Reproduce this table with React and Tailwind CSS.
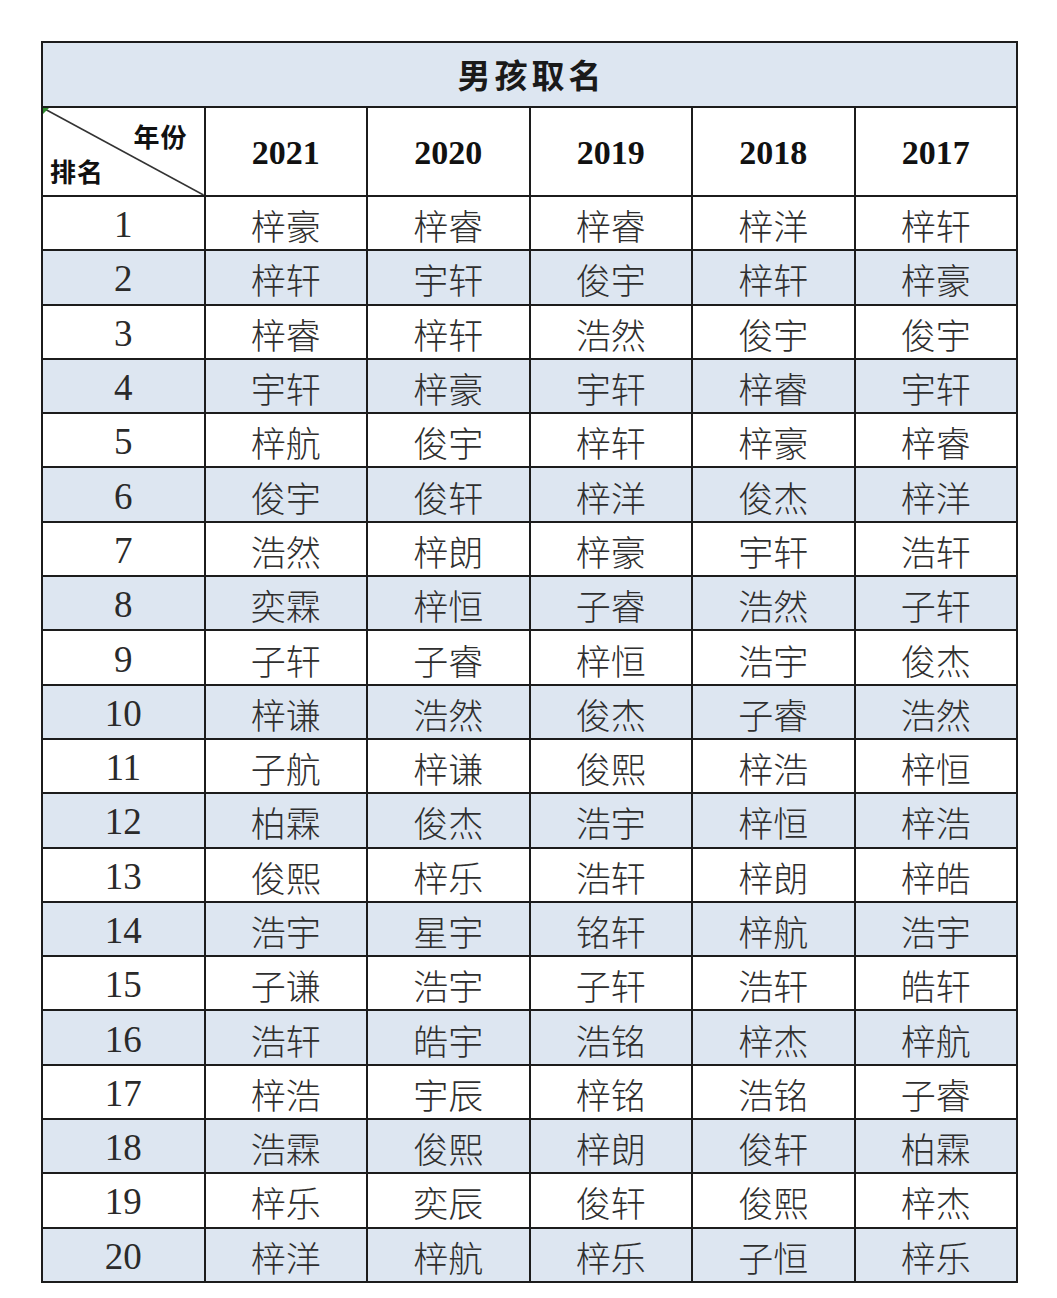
const years = ['2021', '2020', '2019', '2018', '2017']

const rows = [
  ['梓豪', '梓睿', '梓睿', '梓洋', '梓轩'],
  ['梓轩', '宇轩', '俊宇', '梓轩', '梓豪'],
  ['梓睿', '梓轩', '浩然', '俊宇', '俊宇'],
  ['宇轩', '梓豪', '宇轩', '梓睿', '宇轩'],
  ['梓航', '俊宇', '梓轩', '梓豪', '梓睿'],
  ['俊宇', '俊轩', '梓洋', '俊杰', '梓洋'],
  ['浩然', '梓朗', '梓豪', '宇轩', '浩轩'],
  ['奕霖', '梓恒', '子睿', '浩然', '子轩'],
  ['子轩', '子睿', '梓恒', '浩宇', '俊杰'],
  ['梓谦', '浩然', '俊杰', '子睿', '浩然'],
  ['子航', '梓谦', '俊熙', '梓浩', '梓恒'],
  ['柏霖', '俊杰', '浩宇', '梓恒', '梓浩'],
  ['俊熙', '梓乐', '浩轩', '梓朗', '梓皓'],
  ['浩宇', '星宇', '铭轩', '梓航', '浩宇'],
  ['子谦', '浩宇', '子轩', '浩轩', '皓轩'],
  ['浩轩', '皓宇', '浩铭', '梓杰', '梓航'],
  ['梓浩', '宇辰', '梓铭', '浩铭', '子睿'],
  ['浩霖', '俊熙', '梓朗', '俊轩', '柏霖'],
  ['梓乐', '奕辰', '俊轩', '俊熙', '梓杰'],
  ['梓洋', '梓航', '梓乐', '子恒', '梓乐'],
]

const cjk = "font-['Noto_Sans_CJK_SC',sans-serif]"
const serif = "font-['Liberation_Serif','Noto_Sans_CJK_SC',serif]"

export default function App() {
  return (
    <div className="min-h-[1298px] bg-white pl-[41px] pt-[41px]">
      <table className="w-[977px] table-fixed border-collapse border-2 border-[#1c1c1c] text-center">
        <tbody>
          <tr className="h-[65px] bg-[#dde6f1]">
            <td colSpan={6} className="border-2 border-[#1c1c1c] p-0">
              <span className={`${cjk} pl-[4px] text-[33px] font-bold tracking-[4px] text-[#1a1a1a]`}>男孩取名</span>
            </td>
          </tr>
          <tr className="h-[89px] bg-white">
            <td className="relative border-2 border-[#1c1c1c] p-0">
              <svg className="absolute inset-0 h-full w-full" preserveAspectRatio="none" viewBox="0 0 100 100">
                <line x1="0" y1="0" x2="100" y2="100" stroke="#333" strokeWidth="1.6" vectorEffect="non-scaling-stroke" />
              </svg>
              <div className="absolute left-0 top-0 h-0 w-0 border-r-[6px] border-t-[6px] border-r-transparent border-t-[#2f8a2f]" />
              <div className={`${cjk} relative flex h-[87px] flex-col justify-between pb-[11px] pl-[7px] pr-[16px] pt-[15px] text-[26px] font-bold leading-none text-[#111]`}>
                <div className="text-right tracking-[1px]">年份</div>
                <div className="text-left tracking-[1px]">排名</div>
              </div>
            </td>
            {years.map((y) => (
              <td key={y} className={`${serif} border-2 border-[#1c1c1c] p-0 pt-[2px] text-[34px] font-bold text-[#111]`}>
                {y}
              </td>
            ))}
          </tr>
          {rows.map((r, i) => (
            <tr key={i} className={i % 2 === 1 ? 'h-[54.3px] bg-[#dde6f1]' : 'h-[54.3px] bg-white'}>
              <td className={`${serif} border-2 border-[#1c1c1c] p-0 pt-[3px] text-[37px] leading-none text-[#2a2a2a]`}>{i + 1}</td>
              {r.map((name, j) => (
                <td key={j} className={`${cjk} border-2 border-[#1c1c1c] p-0 pt-[3px] text-[35px] font-light leading-none text-[#2f2f2f]`}>
                  {name}
                </td>
              ))}
            </tr>
          ))}
        </tbody>
      </table>
    </div>
  )
}
